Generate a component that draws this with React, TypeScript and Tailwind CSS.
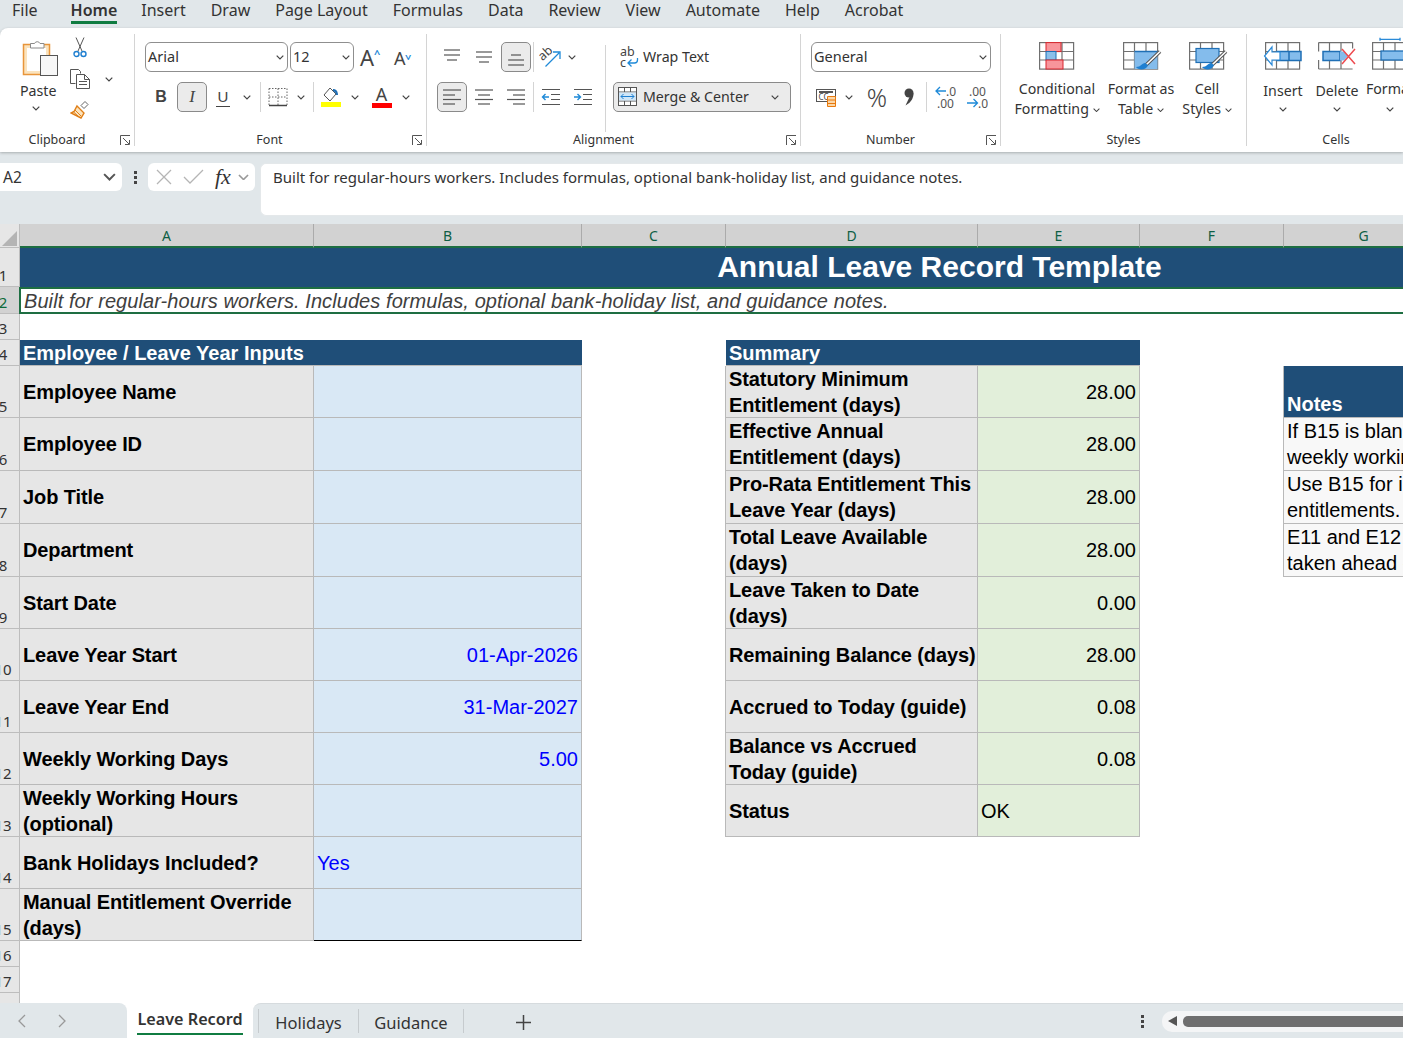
import React from 'react';

const ui = "font-['Noto_Sans',sans-serif]";
const arial = "font-['Liberation_Sans',Arial,sans-serif]";

const Chev = ({ w = 8, c = '#444' }: { w?: number; c?: string }) => (
  <svg width={w} height={w * 0.625} viewBox="0 0 8 5" fill="none" stroke={c} strokeWidth="1.2" className="shrink-0">
    <path d="M0.7 0.7 4 4 7.3 0.7" />
  </svg>
);

const Launcher = () => (
  <svg width="11" height="11" viewBox="0 0 11 11" fill="none" stroke="#555" strokeWidth="1" className="absolute right-[3px] bottom-[6px]">
    <path d="M0.5 10V0.5H10" />
    <path d="M3 3l6 6M9.5 5v4.5H5" />
  </svg>
);

const Sep = ({ h = 'h-[30px]' }: { h?: string }) => <div className={`w-px shrink-0 bg-[#d4d4d4] ${h}`} />;

const Box = ({ w, children, active }: { w: string; children?: React.ReactNode; active?: boolean }) => (
  <div className={`${w} h-[30px] shrink-0 flex items-center justify-center rounded-[5px] ${active ? 'border border-[#8a8a8a] bg-[#ebebeb]' : ''}`}>
    {children}
  </div>
);

const Select = ({ w, text }: { w: string; text: string }) => (
  <div className={`${w} h-[30px] shrink-0 flex items-center justify-between pl-[2px] pr-[3px] rounded-[6px] border border-[#8f8f8f] bg-white text-[14.5px] text-[#333]`}>
    <span>{text}</span>
    <Chev />
  </div>
);

const Lines = ({ rows }: { rows: [number, number, number][] }) => (
  <svg width="20" height="20" viewBox="0 0 20 20" stroke="#555" strokeWidth="1.2">
    {rows.map(([y, a, b], i) => <line key={i} x1={a} x2={b} y1={y} y2={y} />)}
  </svg>
);

const Indent = ({ out }: { out?: boolean }) => (
  <svg width="20" height="20" viewBox="0 0 20 20" fill="none">
    <g stroke="#555" strokeWidth="1.2">
      <path d="M1 2.5h18M10 7.5h9M10 12.5h9M1 17.5h18" />
    </g>
    <path d={out ? 'M8 10H1.5M4.5 7 1.5 10l3 3' : 'M1 10h6.5M4.5 7l3 3-3 3'} stroke="#1f8ad8" strokeWidth="1.4" />
  </svg>
);

const PasteIcon = () => (
  <svg width="36" height="40" viewBox="0 0 36 40" fill="none">
    <rect x="1.5" y="6.5" width="26" height="30" fill="#fbe3bd" stroke="#e8953a" strokeWidth="1.5" />
    <rect x="5" y="10" width="19" height="23" fill="#fff" />
    <path d="M8.5 10V5.5h4a3 3 0 0 1 5.5 0h4V10z" fill="#fff" stroke="#8a8a8a" />
    <rect x="18.5" y="17.5" width="17" height="20" fill="#f7f7f7" stroke="#555" />
  </svg>
);

const CutIcon = () => (
  <svg width="14" height="21" viewBox="0 0 14 21" fill="none">
    <path d="M3 .5 9 14M11 .5 5 14" stroke="#555" strokeWidth="1" />
    <circle cx="3.5" cy="17" r="2.5" stroke="#1f7fd0" strokeWidth="1.4" />
    <circle cx="10.5" cy="17" r="2.5" stroke="#1f7fd0" strokeWidth="1.4" />
  </svg>
);

const CopyIcon = () => (
  <svg width="21" height="20" viewBox="0 0 21 20" fill="none" stroke="#555" strokeWidth="1">
    <path d="M.5.5h8l2 2v2M.5.5v14h5" />
    <path d="M6.5 5.5h8l5 5v9h-13z" fill="#fff" />
    <path d="M14.5 5.5v5h5M9 12.5h8M9 15.5h8" />
  </svg>
);

const BrushIcon = () => (
  <svg width="20" height="20" viewBox="0 0 20 20" fill="none">
    <path d="M15 1.5l3 3-4 4-3-3z" fill="#fff" stroke="#666" />
    <path d="M7 6l7 7-3 5-10-5 3-1.500z" fill="#fbe3bd" stroke="#e07f17" strokeWidth="1.400" />
    <path d="M5 10l6 6M3.500 12l4.500 4" stroke="#e07f17" />
  </svg>
);

const BorderIcon = () => (
  <svg width="20" height="20" viewBox="0 0 20 20" fill="none" stroke="#666" strokeWidth="1">
    <path d="M1 1.500h18M1 10h18M10 1.500v17M1 1.500v17M19 1.500v17" strokeDasharray="1.500 1.500" />
    <path d="M1 18.500h18" strokeWidth="1.500" stroke="#444" />
  </svg>
);

const FillIcon = () => (
  <svg width="20" height="20" viewBox="0 0 20 20" fill="none">
    <path d="M9 1 3 8l6 6 6-7z" fill="#fff" stroke="#555" />
    <path d="M12 2c3 0 5 2 5 6h-2c0-2-1-3-3-4z" fill="#1f6fb5" />
    <rect y="15" width="20" height="5" fill="#ffff00" />
  </svg>
);

const OrientIcon = () => (
  <svg width="22" height="22" viewBox="0 0 22 22" fill="none">
    <text x="0" y="12" fontSize="12.5" fill="#444" fontFamily="Noto Sans" transform="rotate(-42 6 9)">ab</text>
    <path d="M6.500 20.500 20 7M14 6h7v7" stroke="#1f8ad8" strokeWidth="1.300" />
  </svg>
);

const WrapIcon = () => (
  <svg width="19" height="22" viewBox="0 0 19 22" fill="none">
    <text x="0" y="10" fontSize="12.5" fill="#444" fontFamily="Noto Sans">ab</text>
    <text x="0" y="21" fontSize="12.5" fill="#444" fontFamily="Noto Sans">c</text>
    <path d="M17.500 12v2a3 3 0 0 1-3 3H8.500M11.500 13.500 8 17l3.500 3.500" stroke="#1f8ad8" strokeWidth="1.300" />
  </svg>
);

const MergeIcon = () => (
  <svg width="19" height="19" viewBox="0 0 19 19" fill="none">
    <rect x=".5" y=".5" width="18" height="18" fill="#fff" stroke="#555" />
    <path d="M.5 5h18M.5 14h18M6.500.5V5M12.500.5V5M6.500 14v4.500M12.500 14v4.500" stroke="#555" />
    <rect x="1" y="5.500" width="17" height="8" fill="#cfe6f8" />
    <path d="M3 9.500h13M5.500 7 3 9.500 5.500 12M13.500 7 16 9.500 13.500 12" stroke="#1f7fd0" />
  </svg>
);

const AccountingIcon = () => (
  <svg width="21" height="21" viewBox="0 0 21 21" fill="none">
    <rect x=".5" y="2.500" width="19" height="12" fill="#fff" stroke="#555" />
    <path d="M3 5h14" stroke="#555" strokeWidth="2" />
    <text x="2.500" y="13" fontSize="8" fill="#444" fontFamily="Noto Sans">CC</text>
    <path d="M11.500 9.500h8v10h-8z" fill="#fbd7a8" stroke="#e8790d" />
    <path d="M11.500 13h8M11.500 16.500h8" stroke="#e8790d" />
  </svg>
);

const CommaIcon = () => (
  <svg width="10" height="18" viewBox="0 0 10 18" fill="#444">
    <circle cx="5" cy="5" r="4.500" />
    <path d="M9.400 5c.300 4-1.500 9-7.900 12.500L6 8z" />
  </svg>
);

const DecIcon = ({ more }: { more?: boolean }) => (
  <svg width="22" height="24" viewBox="0 0 22 24" fill="none">
    {more ? (
      <>
        <text x="3" y="11" fontSize="12" fill="#555" fontFamily="Noto Sans">.00</text>
        <text x="12" y="23" fontSize="12" fill="#555" fontFamily="Noto Sans">.0</text>
        <path d="M1 18h10M7.500 14l4 4-4 4" stroke="#1f8ad8" strokeWidth="1.300" />
      </>
    ) : (
      <>
        <text x="12" y="11" fontSize="12" fill="#555" fontFamily="Noto Sans">.0</text>
        <text x="3" y="23" fontSize="12" fill="#555" fontFamily="Noto Sans">.00</text>
        <path d="M12 6H2M6 2 2 6l4 4" stroke="#1f8ad8" strokeWidth="1.300" />
      </>
    )}
  </svg>
);

const TableGrid = ({ x = 0 }: { x?: number }) => (
  <g stroke="#707070" strokeWidth="1.200" fill="none">
    <rect x={x + 0.6} y="0.600" width="34" height="26.500" />
    <path d={`M${x + 0.6} 9.500h34M${x + 0.6} 18h34M${x + 11.500} .6v26.500M${x + 23} .6v26.500`} />
  </g>
);

const CondIcon = () => (
  <svg width="36" height="28" viewBox="0 0 36 28" fill="none">
    <TableGrid />
    <rect x="7" y="0.600" width="15" height="9" fill="#f8959b" stroke="#d9272e" />
    <rect x="7" y="9.500" width="10" height="8.500" fill="#8cbfea" stroke="#1f6fb5" />
    <rect x="7" y="18" width="17" height="9" fill="#f8959b" stroke="#d9272e" />
  </svg>
);

const BrushOver = () => (
  <>
    <path d="M37 9.500 22 24" stroke="#555" strokeWidth="3.600" />
    <path d="M37 9.500 22 24" stroke="#fff" strokeWidth="1.600" />
    <path d="M22 21c-3 0-4 4-9 4 2 3 10 4 12-2z" fill="#1f7fd0" />
  </>
);

const TableStyleIcon = () => (
  <svg width="40" height="30" viewBox="0 0 40 30" fill="none">
    <TableGrid />
    <rect x="11.500" y="9.500" width="23" height="17.500" fill="#84bcec" />
    <path d="M11.500 9.500h23" stroke="#1f6fb5" strokeWidth="1.500" />
    <BrushOver />
  </svg>
);

const CellStyleIcon = () => (
  <svg width="40" height="30" viewBox="0 0 40 30" fill="none">
    <TableGrid />
    <rect x="7" y="6.500" width="23" height="14" fill="#84bcec" stroke="#1f6fb5" strokeWidth="1.200" />
    <BrushOver />
  </svg>
);

const InsertIcon = () => (
  <svg width="40" height="28" viewBox="0 0 40 28" fill="none">
    <g transform="translate(2 0)"><TableGrid /></g>
    <rect x="14" y="9.500" width="24" height="9" fill="#84bcec" stroke="#1f6fb5" strokeWidth="1.500" />
    <path d="M26 9.500v9" stroke="#1f6fb5" strokeWidth="1.500" />
    <path d="M9 5 1.500 14 9 23v-5h8V10H9z" fill="#fff" stroke="#2a8ad8" strokeWidth="1.200" />
  </svg>
);

const DeleteIcon = () => (
  <svg width="38" height="28" viewBox="0 0 38 28" fill="none">
    <path d="M.6 .6h34M.6 27h34M.6 .6v9M.6 18v9M11.500 .6v9M11.500 18v9M23 .6v9M23 18v9M34.600 .6v6" stroke="#707070" strokeWidth="1.200" />
    <rect x="5" y="9.500" width="17" height="9" fill="#84bcec" stroke="#1f6fb5" strokeWidth="1.500" />
    <path d="M22 9.500h4l4 4.500-4 4.500h-4" fill="#84bcec" />
    <path d="M24 7l13 15M37 7 24 22" stroke="#ee4b50" strokeWidth="1.500" />
  </svg>
);

const FormatIcon = () => (
  <svg width="36" height="33" viewBox="0 0 36 33" fill="none">
    <path d="M8 .8v3M28 .8v3M8 2.300h20" stroke="#2a8ad8" strokeWidth="1.300" />
    <g transform="translate(0 5)"><TableGrid /></g>
    <rect x="9" y="14" width="26" height="9" fill="#84bcec" stroke="#1f6fb5" strokeWidth="1.300" />
  </svg>
);

const Group = ({ w, label, launcher, pad = '', children }: { w: string; label: string; launcher?: boolean; pad?: string; children: React.ReactNode }) => (
  <div className={`relative flex ${w} shrink-0 flex-col`}>
    <div className="flex-1 min-h-0">{children}</div>
    <div className={`mb-[2px] h-[20px] text-center text-[12.5px] leading-[20px] text-[#333] ${pad}`}>{label}</div>
    {launcher && <Launcher />}
  </div>
);

const GroupSep = () => <div className="my-[6px] w-px shrink-0 bg-[#d4d4d4]" />;

const BigButton = ({ w, icon, lines, topGap = 'mt-[9px]' }: { w: string; icon: React.ReactNode; lines: React.ReactNode; topGap?: string }) => (
  <div className={`${w} shrink-0 flex flex-col items-center`}>
    <div className="flex h-[28px] items-start justify-center">{icon}</div>
    <div className={`${topGap} whitespace-nowrap text-center text-[14.2px] leading-[20px] text-[#333]`}>{lines}</div>
  </div>
);

const Ribbon = () => (
  <div className="flex h-[124px] shrink-0 rounded-tl-[8px] bg-white shadow-[0_1px_3px_rgba(0,0,0,0.25)]">
    <Group w="w-[134px]" label="Clipboard" launcher pad="pr-[20px]">
      <div className="flex pl-[22px] pt-[10px]">
        <div className="flex w-[30px] flex-col items-start">
          <PasteIcon />
          <span className="mt-[3px] -ml-[2px] text-[14.2px] leading-[20px] text-[#333]">Paste</span>
          <div className="mt-[5px] ml-[10px]"><Chev /></div>
        </div>
        <div className="ml-[18px] flex flex-col">
          <div className="ml-[3px] -mt-[1px]"><CutIcon /></div>
          <div className="mt-[11px] flex items-center">
            <CopyIcon />
            <div className="ml-[14px]"><Chev /></div>
          </div>
          <div className="ml-0 mt-[11px]"><BrushIcon /></div>
        </div>
      </div>
    </Group>
    <GroupSep />
    <Group w="w-[291px]" label="Font" launcher pad="pr-[22px]">
      <div className="pl-[10px] pt-[14px]">
        <div className="flex items-center">
          <Select w="w-[143px]" text="Arial" />
          <div className="w-[2px]" />
          <Select w="w-[64px]" text="12" />
          <div className="relative ml-[6px] h-[30px] w-[24px] text-[22px] leading-[30px] text-[#444]">
            A<span className="absolute left-[14px] top-[-3px] text-[11px] font-bold text-[#2a8ad8]">^</span>
          </div>
          <div className="relative ml-[10px] h-[30px] w-[24px] text-[18px] leading-[32px] text-[#444]">
            A<span className="absolute left-[11px] top-[-2px] rotate-180 text-[11px] font-bold text-[#2a8ad8]">^</span>
          </div>
        </div>
        <div className="mt-[10px] flex items-center">
          <Box w="w-[32px]"><span className={`${arial} text-[16px] font-bold text-[#444]`}>B</span></Box>
          <Box w="w-[30px]" active><span className="font-['Liberation_Serif',serif] text-[17px] italic text-[#444]">I</span></Box>
          <Box w="w-[32px]"><span className={`${arial} border-b border-[#444] px-[2px] text-[15px] leading-[18px] text-[#444]`}>U</span></Box>
          <Box w="w-[16px]"><Chev /></Box>
          <div className="w-[5px]" />
          <Sep />
          <Box w="w-[33px]"><BorderIcon /></Box>
          <Box w="w-[14px]"><Chev /></Box>
          <div className="w-[5px]" />
          <Sep />
          <Box w="w-[34px]"><FillIcon /></Box>
          <Box w="w-[13px]"><Chev /></Box>
          <Box w="w-[41px]">
            <div className="flex w-[20px] flex-col items-center">
              <span className={`${ui} text-[18px] leading-[17px] text-[#444]`}>A</span>
              <div className="h-[5px] w-[20px] bg-[#ff0000]" />
            </div>
          </Box>
          <Box w="w-[8px]"><Chev /></Box>
        </div>
      </div>
    </Group>
    <GroupSep />
    <Group w="w-[373px]" label="Alignment" launcher pad="pr-[20px]">
      <div className="flex pl-[10px] pt-[14px]">
        <div className="w-[168px] shrink-0">
          <div className="flex items-center">
            <Box w="w-[30px]"><Lines rows={[[3, 2, 18], [8, 2, 18], [13, 5, 15]]} /></Box>
            <Box w="w-[34px]"><Lines rows={[[5, 2, 18], [10, 2, 18], [15, 5, 15]]} /></Box>
            <Box w="w-[30px]" active><Lines rows={[[8, 5, 15], [13, 2, 18], [18, 2, 18]]} /></Box>
            <div className="w-[2px]" />
            <Sep />
            <Box w="w-[32px]"><OrientIcon /></Box>
            <Box w="w-[12px]"><Chev /></Box>
          </div>
          <div className="mt-[10px] flex items-center">
            <Box w="w-[30px]" active><Lines rows={[[3, 1, 19], [8, 1, 13], [12.5, 1, 19], [17, 1, 13]]} /></Box>
            <Box w="w-[34px]"><Lines rows={[[3, 1, 19], [8, 4, 16], [12.5, 1, 19], [17, 4, 16]]} /></Box>
            <Box w="w-[30px]"><Lines rows={[[3, 1, 19], [8, 7, 19], [12.5, 1, 19], [17, 7, 19]]} /></Box>
            <div className="w-[2px]" />
            <Sep />
            <Box w="w-[33px]"><Indent out /></Box>
            <Box w="w-[32px]"><Indent /></Box>
          </div>
        </div>
        <div className="mt-[3px] h-[87px] w-px shrink-0 bg-[#d4d4d4]" />
        <div className="ml-[7px]">
          <div className="flex h-[30px] items-center pl-[7px] text-[14.2px] text-[#333]">
            <WrapIcon />
            <span className="ml-[4px]">Wrap Text</span>
          </div>
          <div className="mt-[10px] flex h-[30px] w-[178px] items-center justify-between rounded-[5px] border border-[#8a8a8a] bg-[#ebebeb] pl-[4px] pr-[11px] text-[14.2px] text-[#333]">
            <div className="flex items-center">
              <MergeIcon />
              <span className="ml-[6px]">Merge &amp; Center</span>
            </div>
            <Chev />
          </div>
        </div>
      </div>
    </Group>
    <GroupSep />
    <Group w="w-[199px]" label="Number" launcher pad="pr-[20px]">
      <div className="pl-[10px] pt-[14px]">
        <Select w="w-[180px]" text="General" />
        <div className="mt-[10px] flex items-center">
          <Box w="w-[30px]"><AccountingIcon /></Box>
          <Box w="w-[16px]"><Chev /></Box>
          <Box w="w-[40px]"><span className={`${ui} text-[25px] font-light leading-[30px] text-[#444]`}>%</span></Box>
          <Box w="w-[24px]"><CommaIcon /></Box>
          <div className="w-[5px]" />
          <Sep />
          <Box w="w-[36px]"><DecIcon /></Box>
          <Box w="w-[28px]"><DecIcon more /></Box>
        </div>
      </div>
    </Group>
    <GroupSep />
    <Group w="w-[245px]" label="Styles">
      <div className="flex pl-[4px] pt-[14px]">
        <BigButton w="w-[104px]" icon={<CondIcon />} lines={<>Conditional<br />Formatting <span className="inline-block align-middle"><Chev w={7} /></span></>} />
        <BigButton w="w-[64px]" icon={<div className="ml-[3px]"><TableStyleIcon /></div>} lines={<>Format as<br />Table <span className="inline-block align-middle"><Chev w={7} /></span></>} />
        <BigButton w="w-[68px]" icon={<div className="ml-[3px]"><CellStyleIcon /></div>} lines={<>Cell<br />Styles <span className="inline-block align-middle"><Chev w={7} /></span></>} />
      </div>
    </Group>
    <GroupSep />
    <Group w="w-[200px]" label="Cells" pad="pr-[22px]">
      <div className="flex pl-[9px] pt-[14px]">
        <BigButton w="w-[54px]" topGap="mt-[11px]" icon={<InsertIcon />} lines={<>Insert<div className="mt-[6px] flex justify-center"><Chev /></div></>} />
        <BigButton w="w-[54px]" topGap="mt-[11px]" icon={<DeleteIcon />} lines={<>Delete<div className="mt-[6px] flex justify-center"><Chev /></div></>} />
        <BigButton w="w-[52px]" icon={<div className="-mt-[5px]"><FormatIcon /></div>} lines={<>Format<div className="mt-[8px] flex justify-center"><Chev /></div></>} />
      </div>
    </Group>
  </div>
);

const FormulaBar = () => (
  <div className="flex h-[72px] shrink-0 items-start pt-[11px]">
    <div className="-ml-[8px] flex h-[28px] w-[130px] items-center justify-between rounded-[6px] bg-white pl-[11px] pr-[6px] text-[15.500px] leading-[28px] text-[#333]">
      <span>A2</span>
      <Chev w={13} c="#555" />
    </div>
    <div className="flex h-[28px] w-[26px] flex-col items-center justify-center gap-[2px]">
      <div className="h-[3px] w-[3px] bg-[#444]" />
      <div className="h-[3px] w-[3px] bg-[#444]" />
      <div className="h-[3px] w-[3px] bg-[#444]" />
    </div>
    <div className="flex h-[28px] w-[107px] items-center rounded-[6px] bg-white">
      <svg width="16" height="16" viewBox="0 0 16 16" stroke="#b5b5b5" strokeWidth="1.300" className="ml-[8px]"><path d="M1 1l14 14M15 1 1 15" /></svg>
      <svg width="21" height="16" viewBox="0 0 21 16" stroke="#b5b5b5" strokeWidth="1.300" fill="none" className="ml-[11px]"><path d="M1 8l6 6L20 1" /></svg>
      <span className="ml-[11px] font-['Liberation_Serif',serif] text-[22px] italic leading-[24px] text-[#333]">fx</span>
      <div className="ml-[7px]"><Chev w={11} c="#999" /></div>
    </div>
    <div className="ml-[5px] h-[53px] flex-1 rounded-l-[6px] border border-r-0 border-[#e4e8ea] bg-white pl-[12px] pt-[2px] text-[15px] leading-[22px] text-[#333]">
      Built for regular-hours workers. Includes formulas, optional bank-holiday list, and guidance notes.
    </div>
  </div>
);

const RowNum = ({ n, active }: { n: number; active?: boolean }) => (
  <div className={`flex items-end overflow-hidden border-r border-b border-[#bdbdbd] ${active ? 'bg-[#d2d2d2] text-[#0e6b3a]' : 'bg-[#e6e6e6] text-[#333]'}`}>
    <div className="-ml-[7px] w-[20px] shrink-0 text-center text-[15px] leading-[22px]">{n}</div>
  </div>
);

const ColHead = ({ t, last }: { t: string; last?: boolean }) => (
  <div className={`border-b-2 border-[#1e6e42] bg-[#d2d2d2] text-center text-[14px] leading-[24px] text-[#0e5f45] ${last ? '' : 'border-r border-r-[#ababab]'}`}>{t}</div>
);

const cellBase = `${arial} whitespace-pre text-[20px] leading-[26px] overflow-hidden`;

const Label = ({ t }: { t: string }) => (
  <div className={`${cellBase} flex items-center border-r border-b border-[#b9b9b9] bg-[#e6e6e6] pl-[3px] font-bold tracking-[-0.1px] text-black`}>{t}</div>
);

type LeaveRow = { n: number; label: string; input?: string; left?: boolean; sum?: string; val?: string; status?: boolean; note?: string };

const rows: LeaveRow[] = [
  { n: 5, label: 'Employee Name', sum: 'Statutory Minimum\nEntitlement (days)', val: '28.00', note: 'head' },
  { n: 6, label: 'Employee ID', sum: 'Effective Annual\nEntitlement (days)', val: '28.00', note: 'If B15 is blank\nweekly working' },
  { n: 7, label: 'Job Title', sum: 'Pro-Rata Entitlement This\nLeave Year (days)', val: '28.00', note: 'Use B15 for irregular\nentitlements.' },
  { n: 8, label: 'Department', sum: 'Total Leave Available\n(days)', val: '28.00', note: 'E11 and E12 show\ntaken ahead of' },
  { n: 9, label: 'Start Date', sum: 'Leave Taken to Date\n(days)', val: '0.00' },
  { n: 10, label: 'Leave Year Start', input: '01-Apr-2026', sum: 'Remaining Balance (days)', val: '28.00' },
  { n: 11, label: 'Leave Year End', input: '31-Mar-2027', sum: 'Accrued to Today (guide)', val: '0.08' },
  { n: 12, label: 'Weekly Working Days', input: '5.00', sum: 'Balance vs Accrued\nToday (guide)', val: '0.08' },
  { n: 13, label: 'Weekly Working Hours\n(optional)', sum: 'Status', val: 'OK', status: true },
  { n: 14, label: 'Bank Holidays Included?', input: 'Yes', left: true },
  { n: 15, label: 'Manual Entitlement Override\n(days)' },
];

const Sheet = () => (
  <div className="min-h-0 flex-1 overflow-hidden bg-white">
    <div className="grid w-max grid-cols-[20px_294px_268px_144px_252px_162px_144px_160px_415px] grid-rows-[24px_39px_27px_26px_26px_52px_53px_53px_53px_52px_52px_52px_52px_52px_52px_52px_26px_26px_26px]">
      <div className="relative border-r border-b border-[#bdbdbd] bg-[#e6e6e6]">
        <div className="absolute bottom-[1px] right-[2px] h-0 w-0 border-b-[15px] border-l-[15px] border-b-[#b4b4b4] border-l-transparent" />
      </div>
      {['A', 'B', 'C', 'D', 'E', 'F', 'G'].map((t) => <ColHead key={t} t={t} />)}
      <ColHead t="H" last />

      <RowNum n={1} />
      <div className={`${arial} col-span-8 bg-[#1f4e78] text-center text-[30px] font-bold leading-[38px] text-white`}>Annual Leave Record Template</div>

      <RowNum n={2} active />
      <div className={`${arial} col-span-8 -ml-px border-2 border-[#1e6e42] bg-white pl-[3px] text-[20px] italic leading-[24px] tracking-[0.08px] text-[#404040]`}>
        Built for regular-hours workers. Includes formulas, optional bank-holiday list, and guidance notes.
      </div>

      <RowNum n={3} />
      <div className="col-span-8" />

      <RowNum n={4} />
      <div className={`${arial} col-span-2 border-b border-[#b9b9b9] bg-[#1f4e78] pl-[3px] text-[20px] font-bold leading-[26px] text-white`}>Employee / Leave Year Inputs</div>
      <div />
      <div className={`${arial} col-span-2 border-b border-[#b9b9b9] bg-[#1f4e78] pl-[3px] text-[20px] font-bold leading-[26px] text-white`}>Summary</div>
      <div />
      <div className="col-span-2" />

      {rows.map((r) => (
        <React.Fragment key={r.n}>
          <RowNum n={r.n} />
          <Label t={r.label} />
          <div className={`${cellBase} flex items-center border-r border-[#b9b9b9] bg-[#d9e8f5] px-[3px] text-[#0000ff] ${r.left ? 'justify-start' : 'justify-end'} ${r.n === 15 ? 'border-b border-b-black' : 'border-b'}`}>
            {r.input}
          </div>
          {r.sum ? <div className="border-r border-[#b9b9b9]" /> : <div />}
          {r.sum ? <Label t={r.sum} /> : <div />}
          {r.sum ? (
            <div className={`${cellBase} flex items-center border-r border-b border-[#b9b9b9] bg-[#e2efda] px-[3px] text-black ${r.status ? 'justify-start' : 'justify-end'}`}>
              {r.val}
            </div>
          ) : <div />}
          {r.note ? <div className="border-r border-[#b9b9b9]" /> : <div />}
          {r.note === 'head' && (
            <div className={`${arial} col-span-2 flex items-end border-b border-[#b9b9b9] bg-[#1f4e78] pl-[3px] text-[20px] font-bold leading-[26px] text-white`}>Notes</div>
          )}
          {r.note && r.note !== 'head' && (
            <div className={`${cellBase} col-span-2 border-b border-[#b9b9b9] bg-[#f8f8f8] pl-[3px] text-black`}>{r.note}</div>
          )}
          {!r.note && <div className="col-span-2" />}
        </React.Fragment>
      ))}

      {[16, 17, 18].map((n) => (
        <React.Fragment key={n}>
          <RowNum n={n} />
          <div className="col-span-8" />
        </React.Fragment>
      ))}
    </div>
  </div>
);

const TabBar = () => (
  <div className={`flex h-[35px] shrink-0 bg-white ${ui}`}>
    <div className="flex w-[127px] shrink-0 items-center rounded-tr-[8px] bg-[#e1e7ea] pl-[17px]">
      <svg width="9" height="14" viewBox="0 0 9 14" fill="none" stroke="#999" strokeWidth="1.300"><path d="M8 1 2 7l6 6" /></svg>
      <svg width="9" height="14" viewBox="0 0 9 14" fill="none" stroke="#999" strokeWidth="1.300" className="ml-[32px]"><path d="M1 1l6 6-6 6" /></svg>
    </div>
    <div className="flex w-[126px] shrink-0 justify-center rounded-b-[8px] bg-white">
      <div className="h-[32px] w-[106px] whitespace-nowrap border-b-2 border-[#107c41] text-center text-[16.200px] font-semibold leading-[32px] text-[#333]">Leave Record</div>
    </div>
    <div className="flex flex-1 items-center rounded-tl-[8px] border-t border-[#d6dbde] bg-[#e1e7ea]">
      <div className="ml-[5px] h-[24px] w-px bg-[#c6cbce]" />
      <div className="mt-[4px] w-[99px] text-center text-[16.500px] text-[#333]">Holidays</div>
      <div className="h-[24px] w-px bg-[#c6cbce]" />
      <div className="mt-[4px] w-[104px] text-center text-[16.500px] text-[#333]">Guidance</div>
      <div className="h-[24px] w-px bg-[#c6cbce]" />
      <svg width="15" height="15" viewBox="0 0 15 15" stroke="#444" strokeWidth="1.500" className="ml-[52px] mt-[2px]"><path d="M7.500 0v15M0 7.500h15" /></svg>
      <div className="ml-[610px] flex flex-col gap-[2px]">
        <div className="h-[3px] w-[3px] bg-[#444]" />
        <div className="h-[3px] w-[3px] bg-[#444]" />
        <div className="h-[3px] w-[3px] bg-[#444]" />
      </div>
      <div className="ml-[18px] flex h-[21px] flex-1 items-center rounded-l-[10px] bg-[#f4f5f6] pl-[6px]">
        <div className="h-0 w-0 border-y-[5px] border-r-[9px] border-y-transparent border-r-[#555]" />
        <div className="ml-[6px] h-[11px] flex-1 rounded-l-[5px] bg-[#6f6f6f]" />
      </div>
    </div>
  </div>
);

export default function App() {
  const menu = ['Insert', 'Draw', 'Page Layout', 'Formulas', 'Data', 'Review', 'View', 'Automate', 'Help', 'Acrobat'];
  return (
    <div className={`flex h-[1038px] w-[1403px] flex-col overflow-hidden bg-[#e1e7ea] ${ui}`}>
      <div className="flex h-[28px] shrink-0 items-start pl-[12px] text-[16px] leading-[21px] text-[#333]">
        <span>File</span>
        <span className="relative ml-[33px] font-semibold">
          Home
          <span className="absolute -bottom-[3px] left-0 h-[3px] w-full bg-[#107c41]" />
        </span>
        <div className="ml-[24px] flex gap-[25px]">
          {menu.map((m) => <span key={m}>{m}</span>)}
        </div>
      </div>
      <Ribbon />
      <FormulaBar />
      <Sheet />
      <TabBar />
    </div>
  );
}
